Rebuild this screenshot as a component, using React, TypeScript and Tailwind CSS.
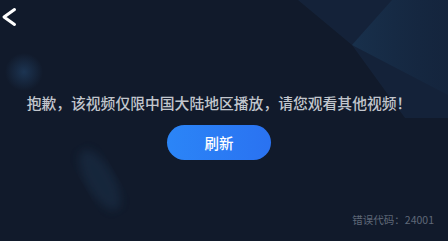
const cjk = {
  fontFamily: '"Noto Sans CJK SC", "Noto Sans", sans-serif',
};

function Backdrop() {
  return (
    <svg
      aria-hidden="true"
      className="pointer-events-none absolute inset-0"
      width="448"
      height="241"
      viewBox="0 0 448 241"
    >
      <defs>
        <radialGradient id="orb" cx="0.5" cy="0.5" r="0.5">
          <stop offset="0" stopColor="#1f3b5c" stopOpacity="0.8" />
          <stop offset="1" stopColor="#1f3b5c" stopOpacity="0" />
        </radialGradient>
        <linearGradient id="wedge" x1="0" y1="0" x2="1" y2="0">
          <stop offset="0" stopColor="#1e4466" stopOpacity="0.7" />
          <stop offset="1" stopColor="#16304e" stopOpacity="0.3" />
        </linearGradient>
        <filter id="soft">
          <feGaussianBlur stdDeviation="4" />
        </filter>
      </defs>
      <polygon points="298,0 352,45 405,118 448,118 448,0" fill="#15243b" opacity="0.9" />
      <polygon points="352,45 392,0 448,0 448,95" fill="url(#wedge)" opacity="0.6" />
      <circle cx="24" cy="72" r="19" fill="url(#orb)" />
      <ellipse
        cx="100"
        cy="180"
        rx="14"
        ry="34"
        transform="rotate(-30 100 180)"
        fill="#1c3550"
        opacity="0.45"
        filter="url(#soft)"
      />
    </svg>
  );
}

export default function App() {
  return (
    <div
      className="relative h-[241px] w-[448px] overflow-hidden bg-[#111a2b]"
      style={cjk}
    >
      <Backdrop />
      {/* back */}
      <svg
        className="absolute left-0 top-0"
        width="20"
        height="32"
        viewBox="0 0 20 32"
        fill="none"
        stroke="white"
        strokeWidth="3"
        strokeLinecap="round"
        strokeLinejoin="round"
      >
        <path d="M14.5 9.5 L4 17 L14.5 24.5" />
      </svg>

      <div className="relative flex flex-col items-center pr-[10px] pt-[92px]">
        <p className="text-[14.8px] font-medium leading-[22px] text-[#c2c6cd]">
          抱歉，该视频仅限中国大陆地区播放，请您观看其他视频！
        </p>
        <button
          className="mt-[11px] flex h-[35px] w-[104px] items-center justify-center rounded-full bg-gradient-to-r from-[#2b85f7] to-[#2a72f1] text-[14.5px] font-medium text-white"
          type="button"
        >
          刷新
        </button>
      </div>

      <div className="absolute bottom-[14px] right-[14px] text-[10.5px] leading-[14px] text-[#5f6878]">
        错误代码：24001
      </div>
    </div>
  );
}
